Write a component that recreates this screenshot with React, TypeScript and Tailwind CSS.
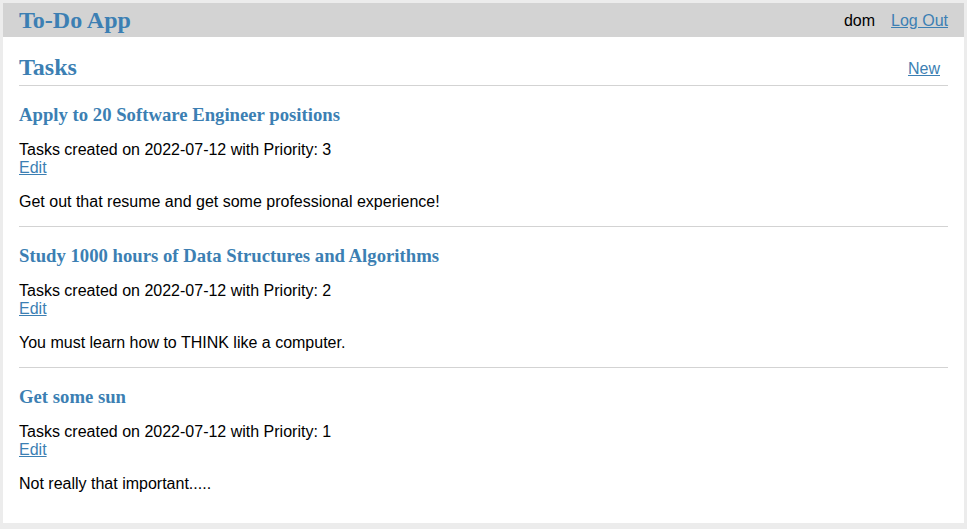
const TASKS = [
  {
    title: "Apply to 20 Software Engineer positions",
    date: "2022-07-12",
    priority: 3,
    desc: "Get out that resume and get some professional experience!",
  },
  {
    title: "Study 1000 hours of Data Structures and Algorithms",
    date: "2022-07-12",
    priority: 2,
    desc: "You must learn how to THINK like a computer.",
  },
  {
    title: "Get some sun",
    date: "2022-07-12",
    priority: 1,
    desc: "Not really that important.....",
  },
];

export default function App() {
  return (
    <div className="h-screen flex flex-col bg-[#ececec] pt-[3px] px-[3px] pb-[6px] font-['Liberation_Sans',Arial,sans-serif] text-[16px] leading-[18px] text-black">
      {/* HEADER */}
      <header className="h-[34px] shrink-0 bg-[#d3d3d3] flex items-center justify-between px-4">
        <a href="#" className="font-['Liberation_Serif','Times_New_Roman',serif] font-bold text-[24px] leading-[27px] text-[#3c7fb3]">
          To-Do App
        </a>
        <div className="flex items-center gap-4 pt-[2px]">
          <span>dom</span>
          <a href="#" className="underline text-[#3c7fb3]">Log Out</a>
        </div>
      </header>

      {/* MAIN */}
      <main className="flex-1 bg-white px-4">
        <div className="flex items-end justify-between pt-[17px] pb-[4px] border-b border-[#d3d3d3]">
          <h1 className="font-['Liberation_Serif','Times_New_Roman',serif] font-bold text-[24px] leading-[27px] text-[#3c7fb3]">
            Tasks
          </h1>
          <a href="#" className="underline text-[#3c7fb3] mr-2 mb-[3px]">New</a>
        </div>

        {TASKS.map((t, i) => (
          <div key={i} className={i < TASKS.length - 1 ? "border-b border-[#d3d3d3]" : ""}>
            <h3 className="mt-[19px] font-['Liberation_Serif','Times_New_Roman',serif] font-bold text-[18.72px] leading-[20px] text-[#3c7fb3]">
              {t.title}
            </h3>
            <p className="mt-4">Tasks created on {t.date} with Priority: {t.priority}</p>
            <a href="#" className="block w-fit underline text-[#3c7fb3]">Edit</a>
            <p className="mt-4 mb-[15px]">{t.desc}</p>
          </div>
        ))}
      </main>
    </div>
  );
}
